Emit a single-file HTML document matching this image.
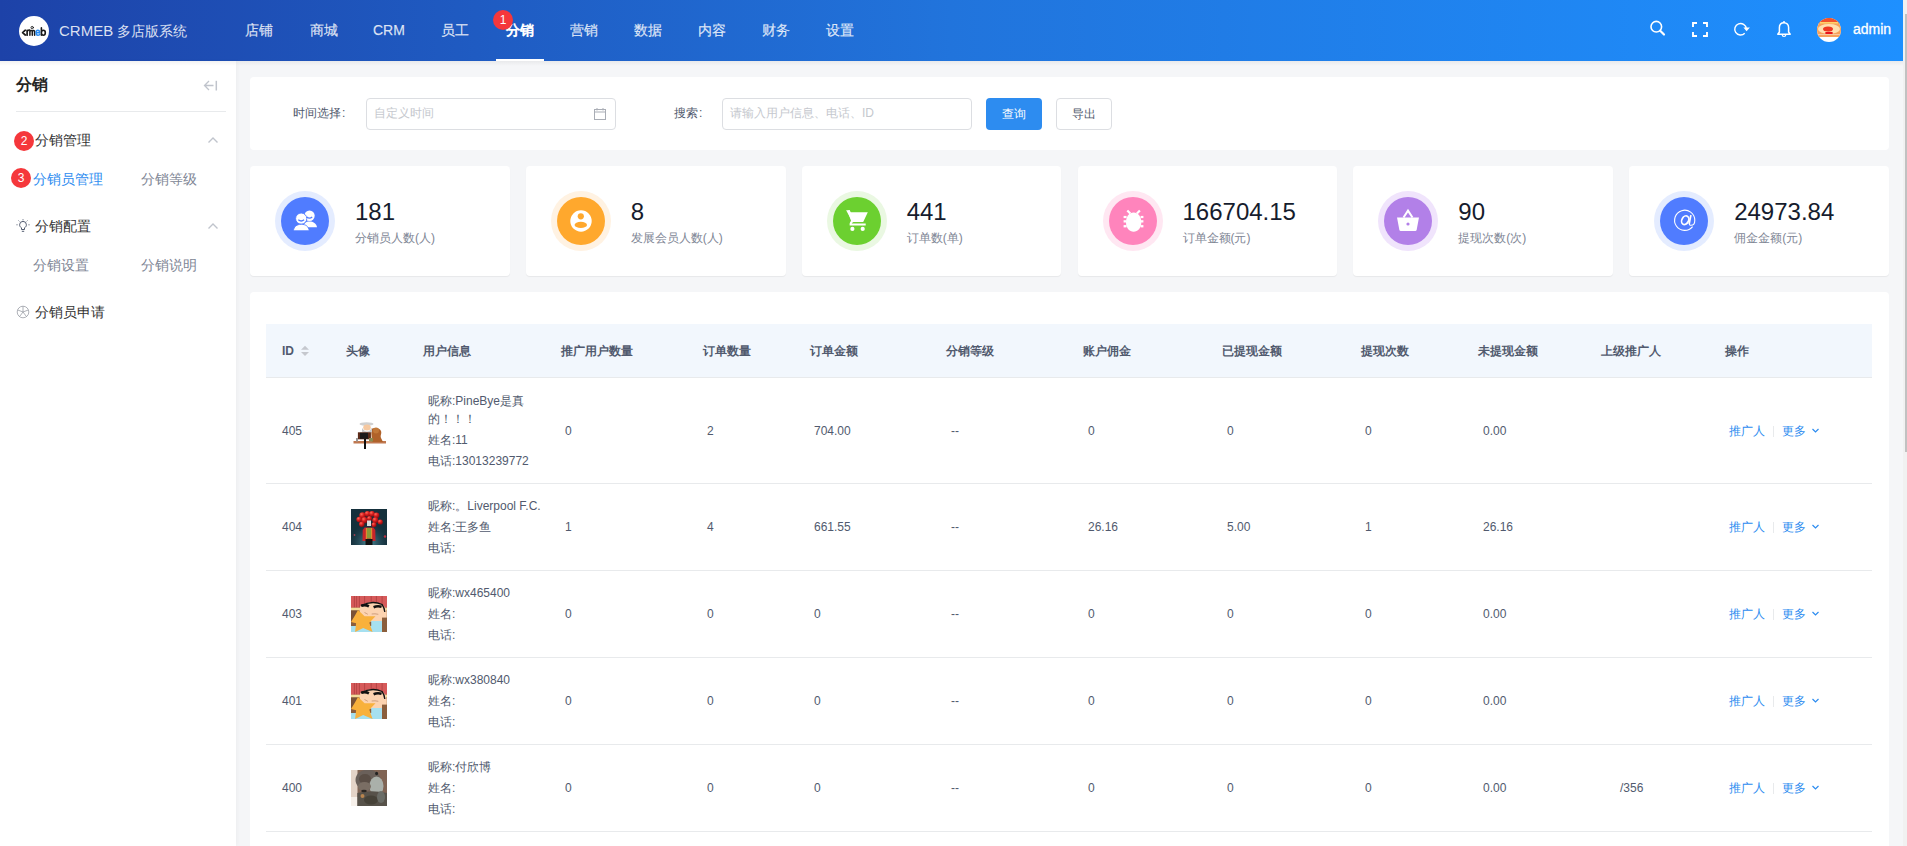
<!DOCTYPE html>
<html><head><meta charset="utf-8">
<style>
*{box-sizing:border-box;margin:0;padding:0}
html,body{width:1907px;height:846px;overflow:hidden}
body{background:#f5f6f8;font-family:"Liberation Sans",sans-serif;position:relative;color:#515a6e}
.abs{position:absolute}
.hdr{left:0;top:0;width:1903px;height:61px;background:linear-gradient(90deg,#1d42a8 0%,#2174dc 50%,#1e90ff 100%);}
.sb-track{left:1903px;top:0;width:4px;height:846px;background:#f1f1f1}
.sb-thumb{left:1905px;top:14px;width:2px;height:438px;background:#c1c1c1}
.side{left:0;top:61px;width:236px;height:785px;background:#fff;box-shadow:2px 0 4px rgba(0,0,0,.03)}
.hshadow{left:0;top:61px;width:1903px;height:5px;background:linear-gradient(rgba(0,0,0,.05),rgba(0,0,0,0))}
.nav{top:0;height:61px;line-height:61px;font-size:14px;color:rgba(255,255,255,.82);font-weight:500;white-space:nowrap;-webkit-text-stroke:0.25px rgba(255,255,255,.6)}
.card{background:#fff;border-radius:4px}
.stat{top:166px;width:259.83px;height:110px;box-shadow:0 1px 1px rgba(0,0,0,.06)}
.ring{position:absolute;left:25px;top:25px;width:60px;height:60px;border-radius:50%}
.inner{position:absolute;left:6px;top:6px;width:48px;height:48px;border-radius:50%}
.inner svg{position:absolute;left:0;top:0}
.num{position:absolute;left:105px;top:32px;font-size:24px;line-height:28px;color:#161c2d;white-space:nowrap}
.lbl{position:absolute;left:105px;top:64px;font-size:12px;line-height:16px;color:#808695;white-space:nowrap}
.menu{font-size:14px;line-height:20px;color:#333;white-space:nowrap}
.badge{width:20px;height:20px;border-radius:50%;background:#f5373b;color:#fff;font-size:12px;line-height:20px;text-align:center}
.th{top:325px;height:53px;line-height:53px;font-size:12px;font-weight:bold;color:#515a6e;white-space:nowrap}
.td{font-size:12px;color:#515a6e;white-space:nowrap;line-height:18px}
.hl{height:1px;background:#e8eaec;left:266px;width:1606px}
.op{font-size:12px;color:#2d8cf0;line-height:18px;white-space:nowrap}
</style></head>
<body>
<div class="abs hdr"></div>
<div class="abs side"></div>
<div class="abs hshadow"></div>
<div class="abs" style="left:19px;top:16px;width:30px;height:30px;border-radius:50%;background:#fff"></div>
<svg class="abs" style="left:19px;top:16px" width="30" height="30" viewBox="0 0 30 30" fill="none" stroke-width="1.7" stroke-linecap="round" stroke-linejoin="round">
<path d="M6.3 14.2 L3.6 16.6 L6.3 19" stroke="#1a1a1a"/>
<path d="M8.1 19.2 V14.3 M8.1 15.6 Q8.9 13.9 10.2 14" stroke="#1a1a1a"/>
<path d="M10.9 19.2 V14.3 M10.9 15.3 Q12.2 13.6 13.3 15.2 V19.2 M13.3 15.3 Q14.5 13.6 15.6 15.2 V19.2" stroke="#1a1a1a" stroke-width="1.5"/>
<circle cx="13.2" cy="11.6" r="1.2" stroke="#1a1a1a" stroke-width="0.9"/>
<path d="M17.2 16.7 H20.6 Q20.6 14.2 18.9 14.2 Q17.1 14.2 17.1 16.7 Q17.1 19.2 18.9 19.2 Q20 19.2 20.7 18.4" stroke="#2a8cf0" stroke-width="1.5"/>
<path d="M22.4 11.9 V19.2 M22.4 16.7 Q22.4 14.2 24.3 14.2 Q26.3 14.2 26.3 16.7 Q26.3 19.2 24.3 19.2 Q22.4 19.2 22.4 16.7" stroke="#1a1a1a" stroke-width="1.6"/>
</svg>
<div class="abs" style="left:59px;top:0;height:61px;line-height:61px;font-size:15px;color:rgba(255,255,255,.85);white-space:nowrap">CRMEB <span style="font-size:14px">多店版系统</span></div>
<div class="abs nav" style="left:245px">店铺</div>
<div class="abs nav" style="left:310px">商城</div>
<div class="abs nav" style="left:373px">CRM</div>
<div class="abs nav" style="left:441px">员工</div>
<div class="abs nav" style="left:506px;color:#fff;font-weight:bold">分销</div>
<div class="abs" style="left:496px;top:59px;width:48px;height:2px;background:#fff"></div>
<div class="abs badge" style="left:493px;top:10px">1</div>
<div class="abs nav" style="left:570px">营销</div>
<div class="abs nav" style="left:634px">数据</div>
<div class="abs nav" style="left:698px">内容</div>
<div class="abs nav" style="left:762px">财务</div>
<div class="abs nav" style="left:826px">设置</div>
<svg class="abs" style="left:1640px;top:10px" width="160" height="40" viewBox="0 0 160 40" fill="none" stroke="#fff" stroke-width="1.8">
<circle cx="16.3" cy="16.7" r="5.3" stroke-width="1.6"/>
<path d="M20.2 20.7 L24 24.5" stroke-width="2.2" stroke-linecap="round"/>
<path d="M53 17 V13 H57 M63 13 H67 V17 M67 22 V26 H63 M57 26 H53 V22" stroke-width="1.9"/>
<path d="M104.74 23.26 A5.8 5.8 0 1 1 106.3 18.6" stroke-width="1.4"/>
<path d="M103.4 17.6 L109.9 17.6 L106.6 21.3 Z" fill="#fff" stroke="none"/>
<path d="M144 12.7 C141.3 12.7 139.4 14.6 139.4 17.6 V22 L137.8 24.2 H150.2 L148.6 22 V17.6 C148.6 14.6 146.7 12.7 144 12.7 Z" stroke-width="1.5" stroke-linejoin="round"/>
<path d="M142.3 24.9 A1.7 1.5 0 0 0 145.7 24.9" stroke-width="1.3"/>
<circle cx="144" cy="11.9" r="1" fill="#fff" stroke="none"/>
</svg>
<svg class="abs" style="left:1817px;top:18px" width="24" height="24" viewBox="0 0 24 24">
<defs><clipPath id="av"><circle cx="12" cy="12" r="12"/></clipPath></defs>
<g clip-path="url(#av)">
<rect width="24" height="24" fill="#fff"/>
<rect width="24" height="19" fill="#f7a15a"/>
<rect y="0" width="24" height="5" fill="#f0522e"/>
<rect x="3" y="4" width="18" height="1.5" fill="#ffd36b"/>
<ellipse cx="12" cy="11" rx="11" ry="5" fill="#ffe0b0"/>
<ellipse cx="11" cy="11" rx="5" ry="2.5" fill="#ee3a24"/>
<ellipse cx="12" cy="15" rx="4" ry="1.3" fill="#e8141c"/>
<rect y="16" width="24" height="1" fill="#f8c8a0"/>
</g>
</svg>
<div class="abs" style="left:1853px;top:0;height:61px;line-height:58px;font-size:14px;color:#fff;font-weight:500;-webkit-text-stroke:0.3px #fff">admin</div>


<div class="abs" style="left:16px;top:73px;font-size:16px;line-height:24px;color:#262626;font-weight:bold">分销</div>
<svg class="abs" style="left:200px;top:76px" width="22" height="20" viewBox="0 0 22 20" fill="none" stroke="#c0c4cc" stroke-width="1.3">
<path d="M4.5 9.5 H13.5 M9 5 L4.5 9.5 L9 14"/><path d="M16.3 4.8 V14.5" stroke-width="1.5"/>
</svg>
<div class="abs" style="left:16px;top:111px;width:210px;height:1px;background:#e8eaec"></div>
<div class="abs badge" style="left:14px;top:131px">2</div>
<div class="abs menu" style="left:35px;top:130px">分销管理</div>
<svg class="abs" style="left:205px;top:134px" width="16" height="12" viewBox="0 0 16 12" fill="none" stroke="#c0c4cc" stroke-width="1.4"><path d="M3.5 8.5 L8 4 L12.5 8.5"/></svg>
<div class="abs badge" style="left:11px;top:168px">3</div>
<div class="abs menu" style="left:33px;top:169px;color:#2d8cf0">分销员管理</div>
<div class="abs menu" style="left:141px;top:169px;color:#808695">分销等级</div>
<svg class="abs" style="left:16px;top:219px" width="15" height="15" viewBox="0 0 15 15" fill="none" stroke="#515a6e" stroke-width="1">
<path d="M5.5 10.5 V8.8 C4.2 8.1 3.6 7 3.6 5.8 A3.4 3.4 0 0 1 10.4 5.8 C10.4 7 9.8 8.1 8.5 8.8 V10.5 Z"/><path d="M5.8 12.3 H8.2"/>
<path d="M7 0.3 V1.3 M1.5 5.8 H0.5 M13.5 5.8 H12.5 M2.6 1.6 L3.3 2.3 M11.4 1.6 L10.7 2.3"/>
</svg>
<div class="abs menu" style="left:35px;top:216px">分销配置</div>
<svg class="abs" style="left:205px;top:220px" width="16" height="12" viewBox="0 0 16 12" fill="none" stroke="#c0c4cc" stroke-width="1.4"><path d="M3.5 8.5 L8 4 L12.5 8.5"/></svg>
<div class="abs menu" style="left:33px;top:255px;color:#808695">分销设置</div>
<div class="abs menu" style="left:141px;top:255px;color:#808695">分销说明</div>
<svg class="abs" style="left:16px;top:305px" width="14" height="14" viewBox="0 0 14 14" fill="none" stroke="#9a9ea6" stroke-width="0.8">
<circle cx="7" cy="7" r="5.8"/><path d="M7 7 L7 1.2 M7 7 L12.2 5 M7 7 L10.5 11.6 M7 7 L3.5 11.6 M7 7 L1.8 5"/>
</svg>
<div class="abs menu" style="left:35px;top:302px">分销员申请</div>

<div class="abs card" style="left:250px;top:77px;width:1639px;height:73px"></div>
<div class="abs td" style="left:293px;top:104px;color:#515a6e">时间选择<span style="margin-left:1px">:</span></div>
<div class="abs" style="left:366px;top:98px;width:250px;height:32px;border:1px solid #dcdee2;border-radius:4px;background:#fff"></div>
<div class="abs td" style="left:374px;top:104px;color:#c5c8ce">自定义时间</div>
<svg class="abs" style="left:593px;top:107px" width="14" height="14" viewBox="0 0 14 14" fill="none" stroke="#a9adb5" stroke-width="1"><rect x="1.5" y="2.5" width="11" height="10"/><path d="M1.5 5 H12.5 M4 1 V3.5 M10 1 V3.5"/></svg>
<div class="abs td" style="left:674px;top:104px;color:#515a6e">搜索<span style="margin-left:1px">:</span></div>
<div class="abs" style="left:722px;top:98px;width:250px;height:32px;border:1px solid #dcdee2;border-radius:4px;background:#fff"></div>
<div class="abs td" style="left:730px;top:104px;color:#c5c8ce">请输入用户信息、电话、ID</div>
<div class="abs" style="left:986px;top:98px;width:56px;height:32px;border-radius:4px;background:#2d8cf0;color:#fff;font-size:12px;line-height:32px;text-align:center">查询</div>
<div class="abs" style="left:1056px;top:98px;width:56px;height:32px;border-radius:4px;border:1px solid #dcdee2;background:#fff;color:#515a6e;font-size:12px;line-height:30px;text-align:center">导出</div>
<div class="abs card stat" style="left:250.00px"><div class="ring" style="background:#e4ecff"><div class="inner" style="background:#507cff"><svg width="48" height="48" viewBox="0 0 48 48"><g fill="#fff"><circle cx="28.5" cy="18.8" r="5.2"/><path d="M22 30.2 C22.5 26.5 25 24.5 28.5 24.5 C32 24.5 35.5 26.5 36 30.2 Z"/><circle cx="20.2" cy="21.6" r="5.6" stroke="#507cff" stroke-width="0.9"/><path d="M12.4 33.8 C12.8 29.5 15.8 27.3 20.3 27.3 C24.8 27.3 27.8 29.5 28.2 33.8 Z" stroke="#507cff" stroke-width="0.9"/></g><path d="M17.3 22.8 Q20.2 25.2 23.1 22.8" stroke="#507cff" stroke-width="1.3" fill="none"/><path d="M25.8 20 Q28.5 22.2 31.2 20" stroke="#507cff" stroke-width="1.3" fill="none"/></svg></div></div><div class="num">181</div><div class="lbl">分销员人数(人)</div></div>
<div class="abs card stat" style="left:525.83px"><div class="ring" style="background:#fff2e2"><div class="inner" style="background:#ffa82d"><svg width="48" height="48" viewBox="0 0 48 48"><circle cx="24" cy="24" r="10.7" fill="#fff"/><circle cx="23.8" cy="19.3" r="3.1" fill="#ffa82d"/><ellipse cx="23.8" cy="27.9" rx="6.2" ry="3.1" fill="#ffa82d"/></svg></div></div><div class="num">8</div><div class="lbl">发展会员人数(人)</div></div>
<div class="abs card stat" style="left:801.67px"><div class="ring" style="background:#eaf8e2"><div class="inner" style="background:#6cd030"><svg width="48" height="48" viewBox="0 0 48 48"><g fill="#fff"><path d="M13.1 13.2 H16.6 L17.6 15.3 H34.8 L30.2 24.9 H19.5 Z"/><path d="M15.6 13.4 L19.3 24.2" stroke="#fff" stroke-width="2.2" stroke-linejoin="round"/><path d="M20 24 Q17.4 25.2 17.6 27.6 H32.7" stroke="#fff" stroke-width="2" fill="none"/><circle cx="19.4" cy="31.9" r="2.1"/><circle cx="29.7" cy="31.9" r="2.1"/></g></svg></div></div><div class="num">441</div><div class="lbl">订单数(单)</div></div>
<div class="abs card stat" style="left:1077.50px"><div class="ring" style="background:#ffe7f2"><div class="inner" style="background:#ff84bc"><svg width="48" height="48" viewBox="0 0 48 48"><g fill="#fff"><path d="M24.6 15.6 C29 15.6 32.3 19.5 32.3 25.5 C32.3 31 28.8 34.8 24.6 34.8 C20.4 34.8 17 31 17 25.5 C17 19.5 20.2 15.6 24.6 15.6 Z"/><path d="M18.3 13.4 L21.3 16.6 M30.9 13.4 L27.9 16.6" stroke="#fff" stroke-width="2.2"/><rect x="14.6" y="18.9" width="3" height="2.2"/><rect x="14.6" y="23.2" width="3" height="2.3"/><rect x="14.6" y="28.1" width="3" height="2.3"/><rect x="31.6" y="18.9" width="2.8" height="2.2"/><rect x="31.6" y="23.2" width="2.8" height="2.3"/><rect x="31.6" y="28.1" width="2.8" height="2.3"/></g></svg></div></div><div class="num">166704.15</div><div class="lbl">订单金额(元)</div></div>
<div class="abs card stat" style="left:1353.33px"><div class="ring" style="background:#f0e4fc"><div class="inner" style="background:#b280e8"><svg width="48" height="48" viewBox="0 0 48 48"><path d="M19.5 20.5 L24 13.6 L28.5 20.5" fill="none" stroke="#fff" stroke-width="2"/><path d="M13 20.5 H35 L32.6 33 C32.4 33.6 32 34 31.3 34 H16.7 C16 34 15.6 33.6 15.4 33 Z" fill="#fff"/><circle cx="24" cy="27" r="1.6" fill="#b280e8"/></svg></div></div><div class="num">90</div><div class="lbl">提现次数(次)</div></div>
<div class="abs card stat" style="left:1629.17px"><div class="ring" style="background:#e4ecff"><div class="inner" style="background:#507cff"><svg width="48" height="48" viewBox="0 0 48 48"><g fill="none" stroke="#fff"><path d="M32.6 29.6 A10.1 10.1 0 1 1 34.8 23.2 C34.8 26.5 33 28.3 31 28.3 C29.6 28.3 29.2 27.4 29.5 26" stroke-width="1.1"/><ellipse cx="25.2" cy="23.2" rx="3.3" ry="4.6" transform="rotate(28 25.2 23.2)" stroke-width="1.7"/><path d="M30.9 18.2 L29.2 27" stroke-width="1.7"/></g></svg></div></div><div class="num">24973.84</div><div class="lbl">佣金金额(元)</div></div>
<div class="abs card" style="left:250px;top:292px;width:1639px;height:600px"></div>
<div class="abs" style="left:266px;top:324px;width:1606px;height:53px;background:#f2f7fd"></div>
<div class="abs hl" style="top:377px"></div>
<div class="abs th" style="left:282px">ID</div>
<div class="abs th" style="left:346px">头像</div>
<div class="abs th" style="left:423px">用户信息</div>
<div class="abs th" style="left:561px">推广用户数量</div>
<div class="abs th" style="left:703px">订单数量</div>
<div class="abs th" style="left:810px">订单金额</div>
<div class="abs th" style="left:946px">分销等级</div>
<div class="abs th" style="left:1083px">账户佣金</div>
<div class="abs th" style="left:1222px">已提现金额</div>
<div class="abs th" style="left:1361px">提现次数</div>
<div class="abs th" style="left:1478px">未提现金额</div>
<div class="abs th" style="left:1601px">上级推广人</div>
<div class="abs th" style="left:1725px">操作</div>
<svg class="abs" style="left:300px;top:344px" width="11" height="14" viewBox="0 0 11 14" fill="#c5c8ce"><path d="M1 5.7 L5 1.8 L9 5.7 Z M1 8 L5 12 L9 8 Z"/></svg>
<div class="abs hl" style="top:483px"></div>
<div class="abs hl" style="top:570px"></div>
<div class="abs hl" style="top:657px"></div>
<div class="abs hl" style="top:744px"></div>
<div class="abs hl" style="top:831px"></div>
<div class="abs td" style="left:282px;top:422.0px">405</div>
<div class="abs" style="left:351px;top:413.0px;width:36px;height:36px"><svg width="36" height="36" viewBox="0 0 36 36"><rect width="36" height="36" fill="#fff"/><rect x="2.5" y="28" width="32.5" height="2.5" fill="#c07850"/><path d="M20 16 C24 14 29 15 30 18 C31 21 29 22 30 25 L32 29 L21 29 Z" fill="#b0622a"/><circle cx="25" cy="17.5" r="3" fill="#c27838"/><ellipse cx="15.5" cy="11" rx="7" ry="1.8" fill="#d0d0d0"/><ellipse cx="16" cy="14.5" rx="3.8" ry="3" fill="#f5c8a0"/><path d="M11 15 Q16 22 21 15 L21 19 Q16 22 11 19 Z" fill="#c8c8c8"/><rect x="6.9" y="19.3" width="13" height="7" fill="#5a2a18"/><rect x="9" y="19.8" width="8" height="6" fill="#1a1a1a"/><rect x="18" y="25" width="4" height="3.5" fill="#8a8a50"/><rect x="13" y="25.8" width="2" height="10.4" fill="#111"/><rect x="5" y="25" width="2" height="3.5" fill="#999"/></svg></div>
<div class="abs td" style="left:428px;top:392.0px;white-space:normal;width:130px"><div style="margin-bottom:3px">昵称:PineBye是真<br>的！！！</div><div style="margin-bottom:3px">姓名:11</div><div>电话:13013239772</div></div>
<div class="abs td" style="left:565px;top:422.0px">0</div>
<div class="abs td" style="left:707px;top:422.0px">2</div>
<div class="abs td" style="left:814px;top:422.0px">704.00</div>
<div class="abs td" style="left:951px;top:422.0px">--</div>
<div class="abs td" style="left:1088px;top:422.0px">0</div>
<div class="abs td" style="left:1227px;top:422.0px">0</div>
<div class="abs td" style="left:1365px;top:422.0px">0</div>
<div class="abs td" style="left:1483px;top:422.0px">0.00</div>
<div class="abs op" style="left:1729px;top:422.0px">推广人</div><div class="abs" style="left:1773px;top:425.5px;width:1px;height:11px;background:#e8eaec"></div><div class="abs op" style="left:1782px;top:422.0px">更多</div><svg class="abs" style="left:1811px;top:427.0px" width="9" height="7" viewBox="0 0 9 7" fill="none" stroke="#2d8cf0" stroke-width="1.2"><path d="M1.5 2 L4.5 5 L7.5 2"/></svg>
<div class="abs td" style="left:282px;top:518.0px">404</div>
<div class="abs" style="left:351px;top:509.0px;width:36px;height:36px"><svg width="36" height="36" viewBox="0 0 36 36"><defs><radialGradient id="g2" cx="0.5" cy="0.95" r="0.55"><stop offset="0" stop-color="#6ab8c8" stop-opacity=".7"/><stop offset="1" stop-color="#2a5060" stop-opacity="0"/></radialGradient><radialGradient id="bl" cx="0.35" cy="0.3" r="0.7"><stop offset="0" stop-color="#ff6a5a"/><stop offset="0.5" stop-color="#d81e1e"/><stop offset="1" stop-color="#8a0c10"/></radialGradient></defs><rect width="36" height="36" fill="#15303c"/><rect width="36" height="36" fill="url(#g2)"/><g fill="url(#bl)"><circle cx="11.5" cy="6.5" r="3.2"/><circle cx="16.5" cy="4.8" r="2.9"/><circle cx="21" cy="4.8" r="2.9"/><circle cx="25.5" cy="6.3" r="2.9"/><circle cx="8.2" cy="10.5" r="2.8"/><circle cx="13.5" cy="11.2" r="3.1"/><circle cx="18.5" cy="9.5" r="2.5"/><circle cx="24.3" cy="11.2" r="3"/><circle cx="29.3" cy="13" r="2.6"/><circle cx="10.8" cy="15.3" r="2.7"/><circle cx="23" cy="15.8" r="2.5"/></g><path d="M15.3 11.5 Q18 9 20.7 11.5 Z" fill="#c41a1a"/><rect x="16" y="11.5" width="4" height="5.5" fill="#dcdcdc"/><path d="M13.5 18.5 H22.5 L24.3 21 L24.5 32 H11.5 L11.7 21 Z" fill="#c8242a"/><rect x="16" y="19" width="4" height="10.5" fill="#8a9a38"/><rect x="14.8" y="19" width="1.2" height="11" fill="#e08a30"/><rect x="20" y="19" width="1.2" height="11" fill="#e08a30"/><rect x="14.5" y="30" width="7" height="6" fill="#121212"/><circle cx="34" cy="27.5" r="1.2" fill="#c03040"/><circle cx="3.5" cy="26" r="0.9" fill="#a04050"/></svg></div>
<div class="abs td" style="left:428px;top:497.0px;white-space:normal;width:130px"><div style="margin-bottom:3px">昵称:。Liverpool F.C.</div><div style="margin-bottom:3px">姓名:王多鱼</div><div>电话:</div></div>
<div class="abs td" style="left:565px;top:518.0px">1</div>
<div class="abs td" style="left:707px;top:518.0px">4</div>
<div class="abs td" style="left:814px;top:518.0px">661.55</div>
<div class="abs td" style="left:951px;top:518.0px">--</div>
<div class="abs td" style="left:1088px;top:518.0px">26.16</div>
<div class="abs td" style="left:1227px;top:518.0px">5.00</div>
<div class="abs td" style="left:1365px;top:518.0px">1</div>
<div class="abs td" style="left:1483px;top:518.0px">26.16</div>
<div class="abs op" style="left:1729px;top:518.0px">推广人</div><div class="abs" style="left:1773px;top:521.5px;width:1px;height:11px;background:#e8eaec"></div><div class="abs op" style="left:1782px;top:518.0px">更多</div><svg class="abs" style="left:1811px;top:523.0px" width="9" height="7" viewBox="0 0 9 7" fill="none" stroke="#2d8cf0" stroke-width="1.2"><path d="M1.5 2 L4.5 5 L7.5 2"/></svg>
<div class="abs td" style="left:282px;top:605.0px">403</div>
<div class="abs" style="left:351px;top:596.0px;width:36px;height:36px"><svg width="36" height="36" viewBox="0 0 36 36"><rect width="36" height="36" fill="#8b5e3c"/><rect width="36" height="11.7" fill="#d65a5a"/><g stroke="#a83c3c" stroke-width="0.7"><path d="M3.4 0V11.7M5.6 0V11.7M8.4 0V11.7M13.6 0V11.7M20.2 0V11.7M25.4 0V11.7M31.1 0V11.7"/></g><rect y="11.7" width="36" height="2.8" fill="#f2dc9a"/><rect y="14.5" width="8" height="10" fill="#7a5236"/><path d="M9.5 9.5 Q20.7 3.5 31.5 8.5 Q34.5 11 35.8 16 V25 Q30 26 22 26 L10 24 Q7.5 17 9.5 9.5 Z" fill="#fcd3b0"/><path d="M9.8 10 Q20.7 3.8 31.1 8.5 Q33.3 11.5 33.8 16" stroke="#111" stroke-width="1.3" fill="none"/><path d="M10.3 9.8 Q14 8.2 17.9 10.3" stroke="#111" stroke-width="2.6" fill="none"/><path d="M22.6 11.2 Q26.5 9.5 30.6 10.8" stroke="#111" stroke-width="2.6" fill="none"/><path d="M13.5 16.5 Q15.5 17.5 16.8 18.3 M20.7 18 Q24 17.5 27.3 18.3" stroke="#b07a5a" stroke-width="0.6" fill="none"/><path d="M20.2 25 H32 V36 H20.2 Z" fill="#a6e0f0"/><path d="M31 21.6 H36 V36 H31 Z" fill="#8b5e3c"/><path d="M0 30 H21 V36 H0 Z" fill="#a6e0f0"/><path d="M7 14 L13.6 20.2 L24.5 20.2 L18.3 26.8 L21.6 36 L12.2 32 L4.1 36 L5.1 27.3 L0 25.9 L4.1 19.3 Z" fill="#f8b13c"/></svg></div>
<div class="abs td" style="left:428px;top:584.0px;white-space:normal;width:130px"><div style="margin-bottom:3px">昵称:wx465400</div><div style="margin-bottom:3px">姓名:</div><div>电话:</div></div>
<div class="abs td" style="left:565px;top:605.0px">0</div>
<div class="abs td" style="left:707px;top:605.0px">0</div>
<div class="abs td" style="left:814px;top:605.0px">0</div>
<div class="abs td" style="left:951px;top:605.0px">--</div>
<div class="abs td" style="left:1088px;top:605.0px">0</div>
<div class="abs td" style="left:1227px;top:605.0px">0</div>
<div class="abs td" style="left:1365px;top:605.0px">0</div>
<div class="abs td" style="left:1483px;top:605.0px">0.00</div>
<div class="abs op" style="left:1729px;top:605.0px">推广人</div><div class="abs" style="left:1773px;top:608.5px;width:1px;height:11px;background:#e8eaec"></div><div class="abs op" style="left:1782px;top:605.0px">更多</div><svg class="abs" style="left:1811px;top:610.0px" width="9" height="7" viewBox="0 0 9 7" fill="none" stroke="#2d8cf0" stroke-width="1.2"><path d="M1.5 2 L4.5 5 L7.5 2"/></svg>
<div class="abs td" style="left:282px;top:692.0px">401</div>
<div class="abs" style="left:351px;top:683.0px;width:36px;height:36px"><svg width="36" height="36" viewBox="0 0 36 36"><rect width="36" height="36" fill="#8b5e3c"/><rect width="36" height="11.7" fill="#d65a5a"/><g stroke="#a83c3c" stroke-width="0.7"><path d="M3.4 0V11.7M5.6 0V11.7M8.4 0V11.7M13.6 0V11.7M20.2 0V11.7M25.4 0V11.7M31.1 0V11.7"/></g><rect y="11.7" width="36" height="2.8" fill="#f2dc9a"/><rect y="14.5" width="8" height="10" fill="#7a5236"/><path d="M9.5 9.5 Q20.7 3.5 31.5 8.5 Q34.5 11 35.8 16 V25 Q30 26 22 26 L10 24 Q7.5 17 9.5 9.5 Z" fill="#fcd3b0"/><path d="M9.8 10 Q20.7 3.8 31.1 8.5 Q33.3 11.5 33.8 16" stroke="#111" stroke-width="1.3" fill="none"/><path d="M10.3 9.8 Q14 8.2 17.9 10.3" stroke="#111" stroke-width="2.6" fill="none"/><path d="M22.6 11.2 Q26.5 9.5 30.6 10.8" stroke="#111" stroke-width="2.6" fill="none"/><path d="M13.5 16.5 Q15.5 17.5 16.8 18.3 M20.7 18 Q24 17.5 27.3 18.3" stroke="#b07a5a" stroke-width="0.6" fill="none"/><path d="M20.2 25 H32 V36 H20.2 Z" fill="#a6e0f0"/><path d="M31 21.6 H36 V36 H31 Z" fill="#8b5e3c"/><path d="M0 30 H21 V36 H0 Z" fill="#a6e0f0"/><path d="M7 14 L13.6 20.2 L24.5 20.2 L18.3 26.8 L21.6 36 L12.2 32 L4.1 36 L5.1 27.3 L0 25.9 L4.1 19.3 Z" fill="#f8b13c"/></svg></div>
<div class="abs td" style="left:428px;top:671.0px;white-space:normal;width:130px"><div style="margin-bottom:3px">昵称:wx380840</div><div style="margin-bottom:3px">姓名:</div><div>电话:</div></div>
<div class="abs td" style="left:565px;top:692.0px">0</div>
<div class="abs td" style="left:707px;top:692.0px">0</div>
<div class="abs td" style="left:814px;top:692.0px">0</div>
<div class="abs td" style="left:951px;top:692.0px">--</div>
<div class="abs td" style="left:1088px;top:692.0px">0</div>
<div class="abs td" style="left:1227px;top:692.0px">0</div>
<div class="abs td" style="left:1365px;top:692.0px">0</div>
<div class="abs td" style="left:1483px;top:692.0px">0.00</div>
<div class="abs op" style="left:1729px;top:692.0px">推广人</div><div class="abs" style="left:1773px;top:695.5px;width:1px;height:11px;background:#e8eaec"></div><div class="abs op" style="left:1782px;top:692.0px">更多</div><svg class="abs" style="left:1811px;top:697.0px" width="9" height="7" viewBox="0 0 9 7" fill="none" stroke="#2d8cf0" stroke-width="1.2"><path d="M1.5 2 L4.5 5 L7.5 2"/></svg>
<div class="abs td" style="left:282px;top:779.0px">400</div>
<div class="abs" style="left:351px;top:770.0px;width:36px;height:36px"><svg width="36" height="36" viewBox="0 0 36 36"><rect width="36" height="36" fill="#806454"/><rect width="6.5" height="36" fill="#e4d4c8"/><rect y="27" width="6.5" height="9" fill="#f6f0ea"/><ellipse cx="17" cy="10" rx="12.5" ry="10.5" fill="#6a605a"/><ellipse cx="14" cy="9" rx="6" ry="5" fill="#5a4e46"/><ellipse cx="25.5" cy="16" rx="7" ry="9.5" fill="#aab0aa"/><ellipse cx="13.5" cy="16.5" rx="6.5" ry="4.5" fill="#7a6e64"/><path d="M6.3 23 Q20 19.5 36 23 V36 H6.3 Z" fill="#57524a"/><ellipse cx="13" cy="21" rx="2.8" ry="1.2" fill="#2a2622"/><circle cx="11.5" cy="26" r="2" fill="#b8844e"/><ellipse cx="25.6" cy="3.5" rx="1.5" ry="1.8" fill="#222"/><ellipse cx="20" cy="30" rx="7" ry="4.5" fill="#464238"/><ellipse cx="30" cy="27" rx="4" ry="6" fill="#6a6c66"/></svg></div>
<div class="abs td" style="left:428px;top:758.0px;white-space:normal;width:130px"><div style="margin-bottom:3px">昵称:付欣博</div><div style="margin-bottom:3px">姓名:</div><div>电话:</div></div>
<div class="abs td" style="left:565px;top:779.0px">0</div>
<div class="abs td" style="left:707px;top:779.0px">0</div>
<div class="abs td" style="left:814px;top:779.0px">0</div>
<div class="abs td" style="left:951px;top:779.0px">--</div>
<div class="abs td" style="left:1088px;top:779.0px">0</div>
<div class="abs td" style="left:1227px;top:779.0px">0</div>
<div class="abs td" style="left:1365px;top:779.0px">0</div>
<div class="abs td" style="left:1483px;top:779.0px">0.00</div>
<div class="abs td" style="left:1620px;top:779.0px">/356</div>
<div class="abs op" style="left:1729px;top:779.0px">推广人</div><div class="abs" style="left:1773px;top:782.5px;width:1px;height:11px;background:#e8eaec"></div><div class="abs op" style="left:1782px;top:779.0px">更多</div><svg class="abs" style="left:1811px;top:784.0px" width="9" height="7" viewBox="0 0 9 7" fill="none" stroke="#2d8cf0" stroke-width="1.2"><path d="M1.5 2 L4.5 5 L7.5 2"/></svg>
<div class="abs sb-track"></div>
<div class="abs sb-thumb"></div>
</body></html>
